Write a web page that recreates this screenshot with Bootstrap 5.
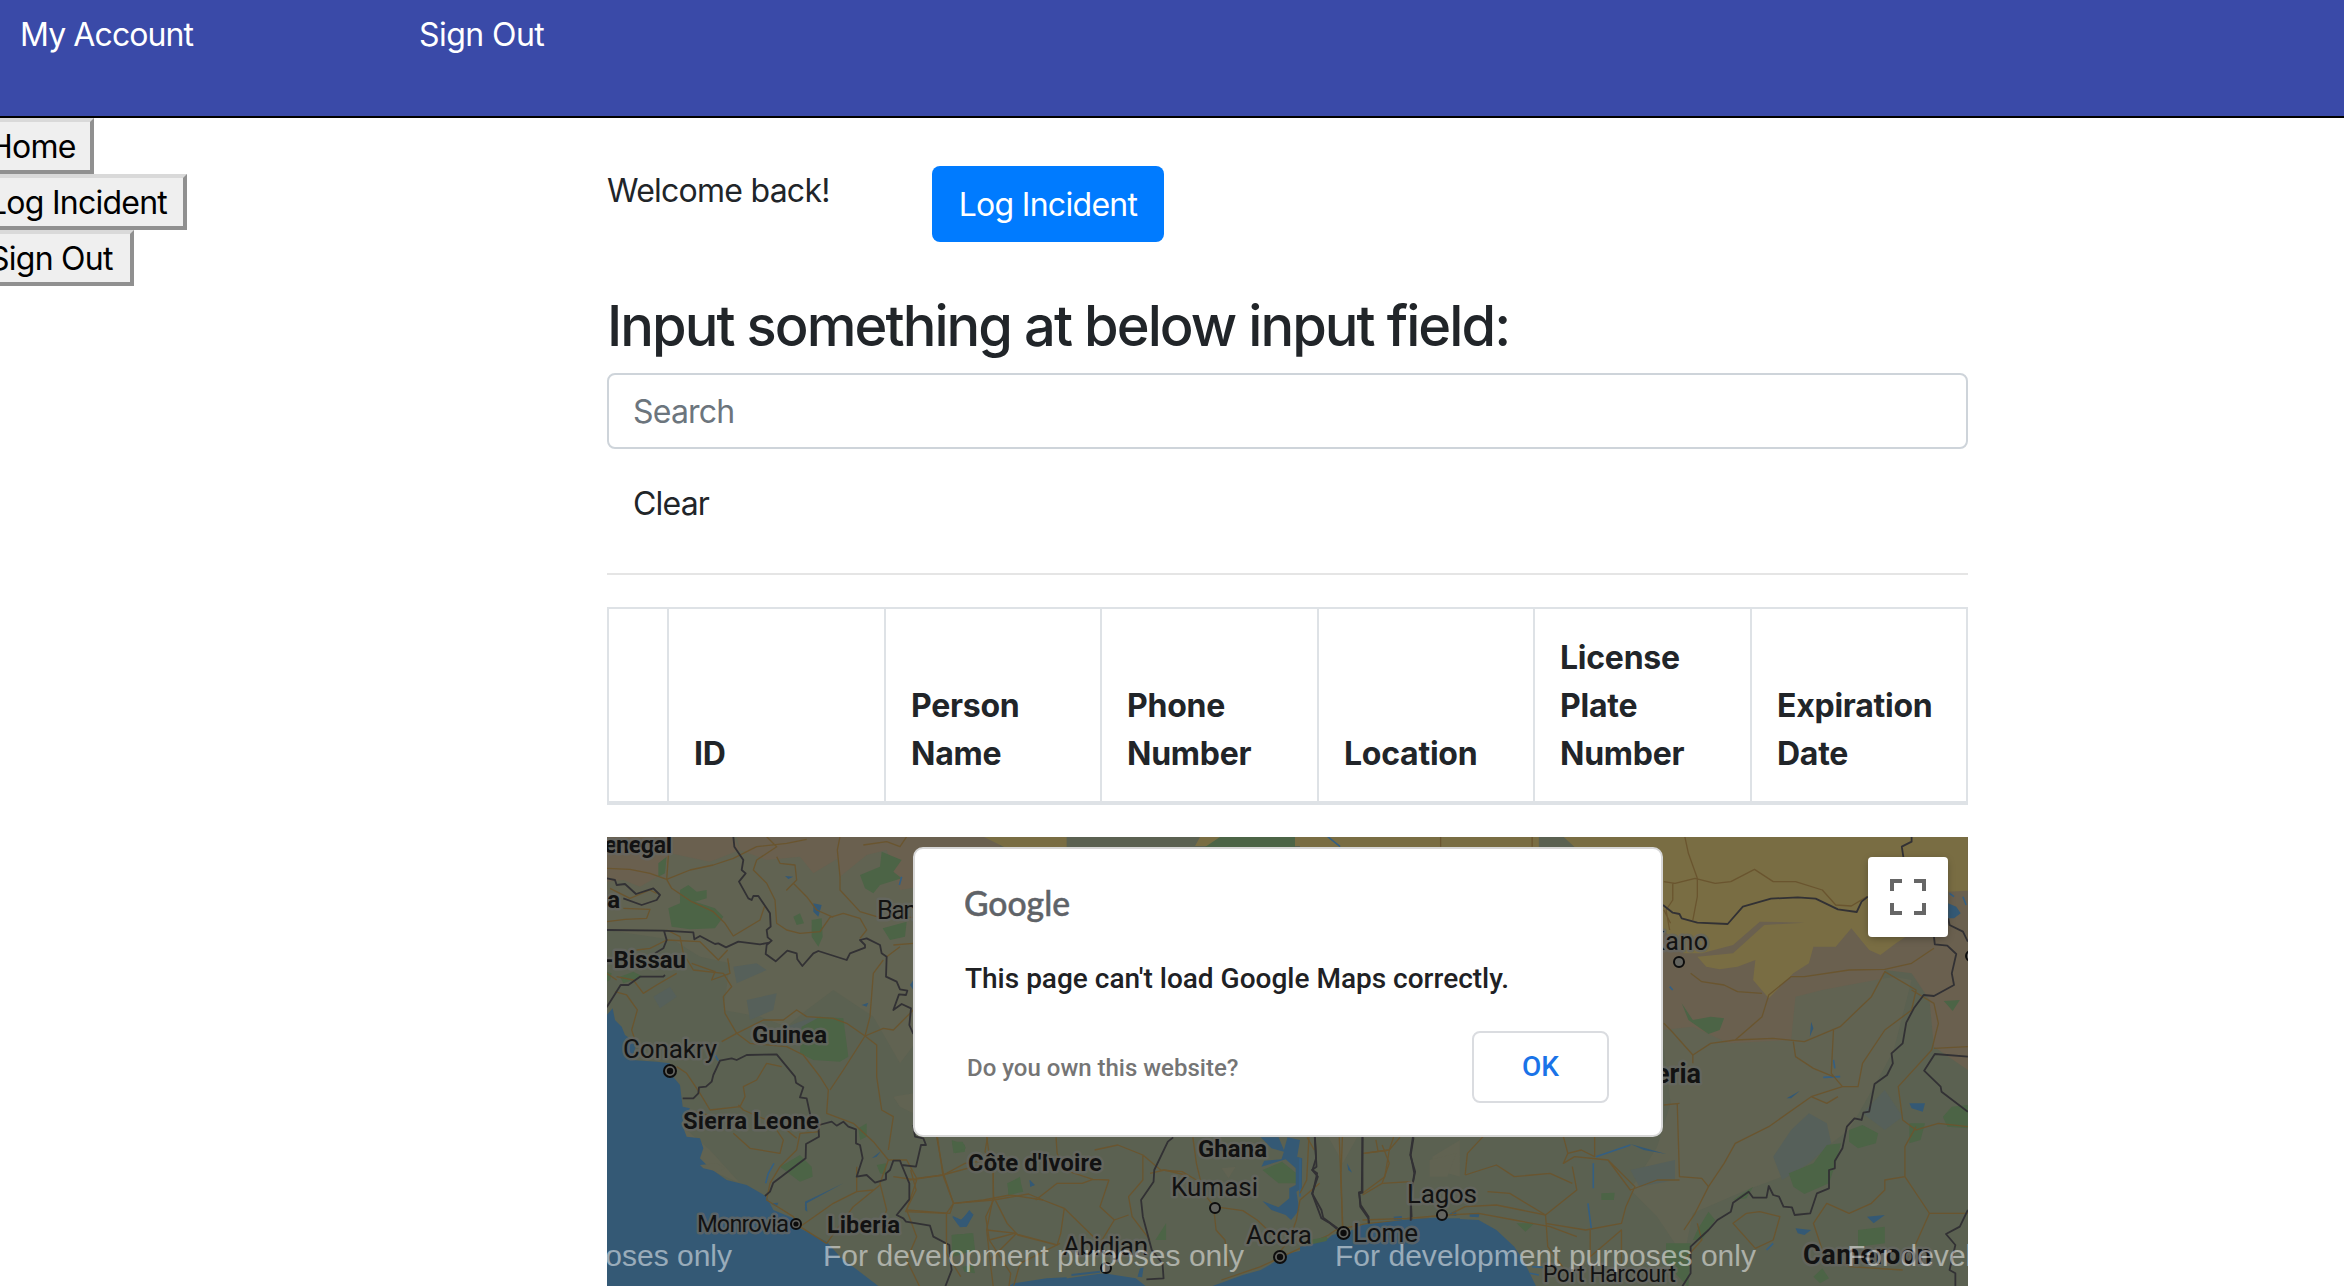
<!DOCTYPE html>
<html lang="en">
<head>
<meta charset="utf-8">
<meta name="viewport" content="width=device-width, initial-scale=1">
<title>Incidents</title>
<link href="https://cdn.jsdelivr.net/npm/bootstrap@5.3.0/dist/css/bootstrap.min.css" rel="stylesheet">
<style>
html { font-size: 32px; }
body { font-family: Inter, "Liberation Sans", sans-serif; font-size: 32px; line-height: 1.5; color: #212529; background: #fff; overflow: hidden; height: 1286px; letter-spacing: -.75px; }
.topbar { height: 118px; background: #3a4aa8; border-bottom: 2px solid #000; padding: 11px 0 0 20px; }
.topbar a { color: #fff; text-decoration: none; width: 399px; line-height: 48px; }
.topbar a:first-child { letter-spacing: -.9px; }
.topbar a:last-child { letter-spacing: -.55px; }
.side { width: 607px; margin-left: -31px; flex: none; }
.side button { height: 56px; border: 4px solid; border-color: #d9d9d9 #909090 #909090 #d9d9d9; background: #efefef; color: #000; padding: 2px 16px 0; line-height: 46px; white-space: nowrap; letter-spacing: -.75px; text-align: left; }
.side .w-home { width: 125px; } .side .w-log { width: 218px; } .side .w-out { width: 165px; }
.content { width: 1361px; margin-left: 31px; padding-top: 48px; flex: none; }
.welcome { width: 325px; padding-top: 1px; }
.btn-log { width: 232px; height: 76px; padding: 0; border: 0; border-radius: 8px; background: #007bff; color: #fff; font-size: 32px; letter-spacing: -.7px; line-height: 78px; }
.btn-log:hover { background: #007bff; color: #fff; }
.ttl { font-size: 56px; font-weight: 550; line-height: 67px; letter-spacing: -1.94px; padding-top: 3px; margin: 48px 0 13px; white-space: nowrap; }
.field { height: 76px; border: 2px solid #ced4da; border-radius: 8px; padding: 1px 24px 0; font-size: 32px; letter-spacing: -.8px; }
.field::placeholder { color: #6c757d; opacity: 1; }
.btn-clear { margin-top: 16px; height: 76px; padding: 2px 26px 0; border: 0; font-size: 32px; letter-spacing: -.8px; color: #212529; }
.sep { height: 2px; margin: 32px 0; background: #e5e5e5; }
.grid-t { width: 1361px; table-layout: fixed; margin: 0 0 32px; border-collapse: separate; border-spacing: 0; border: 0 solid #dee2e6; border-top-width: 2px; border-left-width: 2px; }
.grid-t th { border: 0 solid #dee2e6; border-right-width: 2px; border-bottom-width: 4px; padding: 25px 0 23px 25px; height: 196px; vertical-align: bottom; font-weight: 700; letter-spacing: -.25px; line-height: 48px; }
.map { height: 449px; overflow: hidden; background: #5b6151; }
.map > svg { display: block; }
.dlg { left: 306px; top: 10px; width: 750px; height: 290px; background: #fff; border: 2px solid #d7d7d7; border-radius: 10px; font-family: Roboto, sans-serif; letter-spacing: 0; padding: 37px 52px 0 50px; }
.dlg-msg { font-size: 28px; font-weight: 500; line-height: 36px; margin-top: 31px; color: #202124; white-space: nowrap; }
.dlg-row { margin-top: 34px; }
.dlg-own { font-size: 24px; font-weight: 500; color: #757575; padding: 2px 0 0 2px; }
.dlg-ok { width: 137px; height: 72px; border: 2px solid #dadce0; border-radius: 8px; background: #fff; color: #1a73e8; font-size: 28px; font-weight: 500; padding: 0; }
.fs { right: 20px; top: 20px; width: 80px; height: 80px; background: #fff; border: 0; border-radius: 4px; box-shadow: 0 2px 8px -2px rgba(0,0,0,.4); }
.map path { vector-effect: non-scaling-stroke; stroke-linejoin: round; }
.road path { fill: none; stroke: #6a552f; stroke-width: 1.3; }
.bord path { fill: none; stroke: #323134; stroke-width: 1.8; }
.sea path { fill: #345975; } .rivr path { fill: none; stroke: #345f83; stroke-width: 1.6; }
.green path { fill: #4c6446; } .sand path { fill: #796d43; } .brown path { fill: #6a604f; } .olive path { fill: #616352; } .dim path { fill: #56605a; }
.lbl text { font-family: Roboto, sans-serif; letter-spacing: 0; fill: #121212; stroke: #666763; stroke-width: 5px; stroke-opacity: .75; paint-order: stroke; stroke-linejoin: round; font-size: 26px; }
.lbl .ctry { font-weight: 700; font-size: 24px; }
.wm text { font-family: "Liberation Sans", Arial, sans-serif; letter-spacing: 0; font-size: 30px; fill: #fff; fill-opacity: .5; }
</style>
<script src="https://cdn.jsdelivr.net/npm/bootstrap@5.3.0/dist/js/bootstrap.bundle.min.js"></script>
</head>
<body>
<nav class="topbar d-flex"><a href="#">My Account</a><a href="#">Sign Out</a></nav>
<div class="d-flex">
  <aside class="side d-flex flex-column align-items-start">
    <button class="w-home">Home</button><button class="w-log">Log Incident</button><button class="w-out">Sign Out</button>
  </aside>
  <main class="content">
    <div class="d-flex align-items-start"><div class="welcome">Welcome back!</div><button class="btn btn-log">Log Incident</button></div>
    <h3 class="ttl">Input something at below input field:</h3>
    <input class="form-control field" type="text" placeholder="Search">
    <button class="btn btn-clear">Clear</button>
    <div class="sep"></div>
    <table class="grid-t">
      <colgroup><col style="width:60px"><col style="width:217px"><col style="width:216px"><col style="width:217px"><col style="width:216px"><col style="width:217px"><col style="width:216px"></colgroup>
      <thead><tr><th></th><th>ID</th><th>Person<br>Name</th><th>Phone<br>Number</th><th>Location</th><th>License<br>Plate<br>Number</th><th>Expiration<br>Date</th></tr></thead>
    </table>
    <div class="map position-relative">
      <svg width="1361" height="449" viewBox="607 837 1361 449">
        <!-- terrain, west -->
        <g transform="translate(600 830) scale(.33333)">
          <g class="olive"><path d="M20 20H960V620L900 700 820 560 700 480 620 540 560 590 480 560 370 540 390 400 300 380 220 330 20 300Z"/><path d="M120 930 200 840 260 900 330 960 420 1060 330 1020ZM880 800 940 790V850L900 830Z"/></g>
          <g class="dim"><path d="M160 500 210 470 230 500 180 535ZM400 410 470 400 500 420 410 460ZM560 590 640 560 700 590 600 640ZM440 510 530 490 520 540 450 570Z"/></g>
          <g class="brown"><path d="M20 20H400L420 60 330 95 210 70 190 130 120 170 70 150 20 155ZM410 20H1200V130L900 180 860 60 800 75 720 140 715 85 640 130 600 80 500 90 420 60Z"/></g>
          <g class="sand"><path d="M1150 20H1400V60H1230Z"/></g>
          <g class="green"><path d="M205 235 240 220 240 180 265 165 290 185 320 180 320 205 285 215 345 235 370 260 345 295 270 298 215 290ZM175 100 200 80 195 130 175 140ZM780 135 840 110 845 65 905 90 880 125 905 145 840 165 820 190 795 175ZM580 260 600 250 612 280 590 285ZM635 270 665 265 668 320 655 350 635 320ZM848 295 920 275 915 320 870 330ZM60 440 100 425 130 440 70 460ZM605 590 660 560 730 565 745 680 720 695 640 690 600 670ZM540 1010 600 975 635 1010 638 1040 600 1055ZM775 895 800 880 800 920 780 930ZM830 1005 858 1000 858 1035 840 1030ZM1055 930 1095 945 1095 965 1065 970ZM1225 1060 1260 1040 1265 1080 1225 1095ZM1055 1215 1115 1210 1125 1260 1060 1280ZM20 425 35 430 30 450 20 455Z"/></g>
          <g class="sea"><path d="M20 555 38 535 45 570 65 590 75 615 110 640 95 690 170 695 210 700 215 735 240 765 248 830 270 835 245 880 260 920 300 925 310 955 300 985 330 1015 380 1050 440 1065 500 1100 520 1140 580 1165 600 1195 680 1235 720 1280 840 1372 20 1372Z"/></g>
          <g class="olive"><path d="M300 1005 350 1000 375 1015 355 1025 310 1015Z"/></g>
          <g class="sea"><path d="M1057 1157 1085 1170 1108 1140 1120 1155 1100 1190 1075 1185ZM1290 1050 1303 1065 1290 1070ZM640 220 665 225 655 260 640 245ZM555 138 580 140 565 147ZM615 1115 730 1060 620 1120 622 1145 615 1140ZM785 525 805 518 800 530ZM940 450 930 465 940 480ZM815 985 843 963 830 980ZM1240 1360 1340 1345 1400 1342V1372H1220ZM510 1120 535 1118 530 1130Z"/></g>
          <g class="rivr"><path d="M522 1000 505 1030 497 1060M905 140 898 165M345 675 355 692"/></g>
          <g class="road">
            <path d="M20 115 90 118 150 130 200 148 270 120 340 105 400 85 470 50 560 40 620 28M210 20 205 80 200 148 215 175 275 215 340 245 375 280 400 318 480 270 495 225M20 275 75 268 140 265 150 238 70 235M30 175 90 205 150 180 170 190"/>
            <path d="M500 20 530 50 470 90 460 120 500 160 525 210 530 280 560 300 600 310 660 305 690 262 730 250 780 265 800 300 780 325M530 80 540 100 585 105 590 150 560 180 580 160 620 200 650 240 700 262M720 20 712 60 720 140 720 180 780 245 830 260 940 262M790 45 860 35 900 50 920 20"/>
            <path d="M200 300 240 320 250 370 280 420 370 430 395 470 370 500 375 550 410 610 450 640 560 650 610 675 660 740 685 780 680 850 760 880 820 935 865 990 840 1060 860 1140 840 1190"/>
            <path d="M110 360 150 355 200 330 300 335 355 390 383 360M383 385 390 430 335 450 345 425 275 400M50 440 100 450 130 490 170 465 230 430M45 485 80 495 112 540 95 600 105 630M20 430 50 450"/>
            <path d="M365 635 410 610 490 570 550 570 590 540 620 560 700 565 740 580 795 618 830 645 830 740 845 840 880 860 865 960M850 390 820 430 810 560 795 618 730 720 690 780M795 618 850 595 880 600 940 540"/>
            <path d="M230 710 260 730 300 790 330 840 420 830 435 800 430 770 470 750 500 700 545 710M250 860 290 845 340 860M400 910 450 955 540 970 550 930 530 900M660 905 600 910 590 960 540 1010 510 1060 500 1110 580 1160 600 1190 680 1240 760 1130 840 1065M600 1190 700 1120 770 1085 820 1080M770 1085 770 1010M560 900 590 925M415 825 430 840 500 870"/>
            <path d="M865 990 920 990 950 1045 1030 1035 1095 1000 1170 990 1160 920M1010 920 1030 1030 1060 1120 1150 1110 1230 1095 1330 1110M880 1040 950 1050 920 1140 1050 1150 1060 1120M920 1140 950 1220 920 1290 960 1372M1160 1200 1250 1210 1170 1290 1180 1372M1180 1000 1180 1100 1160 1200 1170 1290M1240 1372 1260 1300 1380 1240M880 345 940 340M860 380 900 350"/>
          </g>
          <g class="bord">
            <path d="M400 20 403 50 430 90 425 120 437 130 417 155 445 205 455 210 460 198 475 198 510 250 512 290 500 300 503 322 515 332 500 345 497 372 527 394 562 362 590 370 592 388 607 408 640 370 655 363 740 390 750 370 795 353 795 345 780 330 800 325 840 345 845 370 860 380 858 440 890 455 900 478 922 482 918 495 897 493 880 540 905 522 933 535 928 585 940 612"/>
            <path d="M20 145 45 150 50 165 75 162 108 192 160 175 180 195 170 210 125 225 70 205M20 300 190 302 280 307 283 328 300 318 345 342 355 340 378 352 415 335 480 343 508 338M192 302 200 330 190 355 165 370M195 435 190 440 120 440 85 465 62 465 40 500 20 532"/>
            <path d="M248 805 280 805 295 790 297 772 318 770 335 755 340 735 360 692 395 685 410 690 440 675 530 673 585 740 588 758 610 772 600 802 620 805 633 865 655 885 657 920 618 942 617 985 520 1058 510 1085 495 1098M657 885 695 875 710 887 730 875 745 890 768 898 768 940 780 945 788 985 770 1040 800 1035 825 1058 858 1048 858 1030 870 1020 880 992 900 992 905 1005 948 1010 963 945 978 945 970 925 945 920 940 885M905 1005 928 1060 928 1108 890 1155 910 1165 918 1175 990 1187 1000 1220 1048 1245 1050 1280 1055 1320 1035 1372"/>
          </g>
        </g>
        <!-- coast, centre -->
        <g transform="translate(900 1120) scale(.35714 .33333)">
          <g class="green"><path d="M145 65 175 65 185 85 150 100ZM300 190 335 175 345 215 305 225ZM145 345 205 340 210 390 145 390ZM1015 150 1070 125 1110 160 1110 190 1060 190ZM715 360 745 310 745 360ZM175 440 205 435 210 460 180 455ZM1165 360 1200 355 1200 382 1160 382Z"/></g>
          <g class="olive"><path d="M1200 52 1280 52 1240 130ZM900 145 940 140 920 175ZM1490 110 1568 60V170L1500 150Z"/></g>
          <g class="sea">
            <path d="M320 495 470 475 570 460 660 475 690 500H320ZM870 500 960 465 1010 450 1090 400 1170 382 1210 345 1310 322 1430 300 1568 295V500Z"/>
            <path d="M1010 52 1060 52 1075 90 1085 52 1120 60 1112 110 1126 115 1125 205 1110 215 1118 270 1095 300 1080 285 1040 270 1015 243 1060 262 1090 235 1090 205 1108 195 1108 145 1080 118 1012 140 1020 122 1068 118 1075 95 1040 85ZM362 180 378 195 365 200ZM146 290 170 300 190 280 206 282 185 320 168 322ZM1252 130 1266 158 1255 150ZM672 445 682 442 678 472 665 470ZM480 462 560 452 560 458 480 468Z"/>
          </g>
          <g class="road">
            <path d="M245 52 238 95 260 130 262 230 300 310 330 345 440 375M105 52 120 165 150 250 262 240 360 222 400 240 460 265 560 370 600 300 560 260 585 180 540 178 460 150 440 100 437 52M545 90 610 75 680 105 680 180 640 230 650 290 700 360M25 180 120 165 240 130M380 240 440 190 510 190 540 178M15 275 130 280 150 250M15 275 45 210 30 150M130 280 130 400 170 470M460 265 450 340 440 375 320 340 250 360 310 460 305 500M250 360 240 290 262 240M600 300 640 285M680 105 730 150 790 155 830 180"/>
            <path d="M820 52 830 130 850 220 880 260 960 272 1000 300 1050 350M880 280 885 330 910 360 920 440M700 160 740 150 800 165M1230 52 1235 200 1240 320M1295 100 1370 90 1400 52M1350 75 1370 130 1350 190 1295 225M1350 190 1430 185M900 480 1010 440 1100 395 1200 345 1220 330 1310 310 1480 295M1175 190 1120 240 1110 300 1090 360 1060 400M1140 52 1160 90"/>
          </g>
          <g class="bord"><path d="M765 52 750 65 712 150 710 185 675 240 680 290 705 390 735 430 738 475 690 478M1162 52 1165 115 1155 150 1168 160 1155 222 1180 270 1185 293 1225 325M1295 52 1293 215 1285 217 1290 255 1312 290 1312 310M1438 52 1430 105 1440 160 1430 230 1433 300"/></g>
        </g>
        <!-- terrain, east -->
        <g transform="translate(1300 830) scale(.44643 .33333)">
          <g class="brown"><path d="M800 20H1496V720L1420 650 1410 510 1370 430 1310 420 1290 520 1210 600 1100 660 960 650 880 600 810 600Z"/><path d="M900 800 960 740 1020 760 990 810 930 870 880 860ZM1150 810 1200 800 1180 850Z"/></g>
          <g class="olive"><path d="M810 600 880 590 960 640 1100 630 1110 500 1170 480 1250 460 1330 440 1370 450 1330 660 1290 760 1230 900 1100 1030 1000 1080 880 1150 860 1280 800 1160 740 1080 800 950 830 820ZM290 990 350 970 330 1040 290 1040Z"/></g>
          <g class="dim"><path d="M1100 900 1140 850 1180 880 1190 940 1140 1000 1080 1050 1060 980ZM1260 850 1310 780 1350 860 1310 900ZM740 1020 840 990 840 1050 760 1070Z"/></g>
          <g class="sand"><path d="M0 20H535V53H0ZM590 20H1496V182L1450 185 1440 250 1380 300 1335 340 1300 375 1275 360 1235 295 1200 350 1150 350 1140 400 1105 430 1090 450 1050 505 1015 450 1020 390 980 410 940 418 910 410 890 380 970 370 1040 285 1130 278 1030 275 970 345 900 370 860 370 815 300Z"/></g>
          <g class="green"><path d="M855 520 880 570 920 560 950 565 940 600 915 612 870 570ZM1095 1030 1150 1000 1180 945 1212 940 1200 1000 1185 1060 1130 1092 1105 1070ZM1230 900 1260 885 1295 910 1290 940 1250 955 1230 935ZM1442 513 1478 510 1462 543ZM1440 860 1460 830 1496 825V895L1450 890ZM1365 880 1400 880 1390 930 1365 940ZM890 1200 915 1145 930 1170 900 1230 880 1230ZM820 1240 875 1240 870 1372 820 1300ZM485 1180 525 1180 505 1205ZM675 1090 705 1088 703 1110 675 1110ZM1250 1200 1310 1190 1310 1240 1250 1250ZM1150 1340 1170 1315 1185 1345 1165 1360ZM970 1110 1015 1070 1000 1105ZM0 1235 60 1220 60 1255 20 1250Z"/></g>
          <g class="sea"><path d="M0 1250 70 1230 140 1185 230 1170 300 1163 400 1170 440 1200 480 1250 500 1290 530 1372H0ZM210 1160 228 1158 228 1170 210 1170ZM380 1150 402 1150 400 1162 380 1160ZM1452 220 1470 230 1480 250 1465 265 1452 265ZM1365 820 1400 820 1395 845 1370 835ZM1110 1195 1145 1200 1130 1215 1115 1210ZM1270 1160 1310 1155 1285 1180ZM1145 575 1150 595 1142 620ZM1090 805 1120 782 1100 805ZM740 942 820 972 770 960ZM330 1155 350 1140 350 1158Z"/></g>
          <g class="rivr"><path d="M663 980 740 945M657 1000 657 1075M645 1120 653 1200M62 20 90 50M828 470 835 480M1172 742 1210 740M1195 690 1198 715M1455 190 1465 200M1485 200 1492 225M1045 1260 1060 1240M520 1310 545 1312M515 1330 535 1335M0 985V1100"/></g>
          <g class="road">
            <path d="M862 20 870 70 890 145 890 200 880 270M815 155 840 160 885 145 930 160 965 155 1018 118 1060 155 1110 155 1170 180 1200 225 1235 228 1270 200M835 160 835 210 820 240 828 300M315 20V50M520 20V50M815 240 830 280"/>
            <path d="M875 430 900 455 950 465 980 485 1035 490M1130 440 1100 440 1050 495 1035 560 975 630 920 640 880 675 830 600 815 580M975 630 1060 625 1130 635 1210 590 1280 500 1310 425 1380 480 1370 540 1310 600 1260 700 1250 770 1215 770 1190 730 1195 600M1130 440 1230 420 1310 418 1370 400 1420 355M1105 635 1110 680 1150 715 1195 740M1215 770 1145 800 1050 890 975 940 950 1000 915 1070 885 1150 860 1200M1145 800 1180 820 1205 800"/>
            <path d="M1370 480 1420 520 1430 580 1415 660 1340 770 1350 870 1380 900 1430 880 1496 890M1420 655 1496 650M1380 890 1355 950 1355 1040 1390 1110 1410 1150 1380 1240 1360 1290M1355 1040 1310 1050 1310 1080 1280 1120 1230 1150 1180 1120 1150 1180 1170 1260 1230 1310 1350 1320M1410 1150 1496 1150"/>
            <path d="M845 820 850 1040 900 1045 915 1070M880 675 880 700M815 825 850 820M600 970 590 1000 615 980 690 990 740 1080 800 1050 850 1050M590 920 600 970 630 960 660 980 660 920M690 990 750 1070 730 1130 720 1180 640 1200 550 1180M610 1010 620 1080 550 1155 440 1125 370 1130 340 1150M550 1155 555 1250 610 1350M370 1035 440 1005 480 1040 560 1030 610 1060M370 1035 375 970 410 920M145 970 200 960 210 920M200 960 190 1040 140 1090M170 930 175 965M140 1170 240 1165 330 1155 400 1150 480 1170 560 1190 620 1220"/>
            <path d="M1000 1150 1030 1145 1075 1160 1060 1230 1020 1255 970 1180 1000 1150M860 1290 900 1230 890 1180M650 1200 650 1280 720 1200 720 1300M420 1085 470 1090 550 1155M95 920 92 1030 95 1190M20 920 15 1050 0 1090"/>
          </g>
          <g class="bord">
            <path d="M1370 20V35L1348 50 1352 85M813 225 835 248 850 252 855 265 890 278 958 282 992 230 1055 206 1115 202 1155 206 1205 238 1247 246 1258 215 1272 200M1452 265 1455 285 1485 305 1496 335M1420 320 1422 343 1450 347 1470 372 1460 430 1465 465 1420 498 1397 495 1375 535 1358 578 1350 640 1325 670 1328 700 1315 735 1287 762 1275 845 1262 848 1258 870 1242 865 1225 890 1215 955 1198 993 1198 1015 1185 1020 1185 1075 1158 1090 1143 1150 1108 1155 1102 1132 1083 1130 1073 1100 1060 1095 1050 1068 1045 1103 1015 1103 1005 1085 970 1118 965 1145 935 1170 915 1200 875 1250 875 1330 855 1372M1496 680 1422 672 1398 722 1435 770 1437 785 1496 845M1496 1140 1478 1190 1447 1212 1468 1245 1455 1320 1468 1330 1468 1372"/>
            <path d="M33 920 37 1010 27 1020 40 1040 27 1090 48 1165 65 1178 83 1197M140 920V1088L133 1090 135 1130 153 1165 155 1180M253 920 247 975 258 1025 248 1090 248 1172"/>
          </g>
        </g>
        <path d="M1300 837H1200L1195 846H1300ZM1000 837H1062L1052 847H1010Z" fill="#796d43"/>
        <path d="M1220 837H1295V847H1205Z" fill="#4c6446"/>
        <g class="lbl">
          <text class="ctry" x="590" y="853" textLength="82">Senegal</text>
          <text class="ctry" x="620" y="908" text-anchor="end">The Gambia</text>
          <text class="ctry" x="686" y="968" text-anchor="end">Guinea-Bissau</text>
          <text x="623" y="1057.5" textLength="94">Conakry</text>
          <text x="877" y="918.5" textLength="85">Bamako</text>
          <text class="ctry" x="752" y="1043" textLength="75">Guinea</text>
          <text class="ctry" x="683" y="1129" textLength="136">Sierra Leone</text>
          <text class="ctry" x="968" y="1171" textLength="134">Côte d'Ivoire</text>
          <text x="697" y="1231.5" textLength="92" style="font-size:24px">Monrovia</text>
          <text class="ctry" x="827" y="1233" textLength="73">Liberia</text>
          <text class="ctry" x="1198" y="1157" textLength="69">Ghana</text>
          <text x="1171" y="1195.5" textLength="87">Kumasi</text>
          <text x="1246" y="1244" textLength="66">Accra</text>
          <text x="1353" y="1241.5" textLength="65">Lome</text>
          <text x="1063" y="1255" textLength="85">Abidjan</text>
          <text x="1407" y="1202.5" textLength="70">Lagos</text>
          <text x="1543" y="1282" textLength="133" style="font-size:23px">Port Harcourt</text>
          <text class="ctry" x="1803" y="1264" textLength="129" style="font-size:27px">Cameroon</text>
          <text x="1649" y="950" textLength="59" style="font-size:25px">Kano</text>
          <text class="ctry" x="1701" y="1083" text-anchor="end" style="font-size:27px">Nigeria</text>
        </g>
        <g fill="none" stroke="#0d0d0d" stroke-width="2">
          <g fill="#63645f"><circle cx="670" cy="1071" r="6"/><circle cx="796" cy="1224" r="5"/><circle cx="1280" cy="1257" r="6"/><circle cx="1343.500" cy="1233" r="6"/><circle cx="1215" cy="1208" r="5"/><circle cx="1106" cy="1268" r="5"/><circle cx="1442" cy="1215" r="5"/><circle cx="1679" cy="962" r="5"/><circle cx="1971" cy="956" r="5"/></g>
          <g fill="#0d0d0d" stroke="none"><circle cx="670" cy="1071" r="3.200"/><circle cx="796" cy="1224" r="2.600"/><circle cx="1280" cy="1257" r="3.200"/><circle cx="1343.500" cy="1233" r="3.200"/></g>
        </g>
        <g class="wm">
          <text x="312" y="1266" textLength="420">For development purposes only</text>
          <text x="823" y="1266" textLength="421">For development purposes only</text>
          <text x="1335" y="1266" textLength="421">For development purposes only</text>
          <text x="1847" y="1266" textLength="421">For development purposes only</text>
        </g>
      </svg>
      <div class="dlg position-absolute">
        <svg class="d-block" width="110" height="44" viewBox="0 0 110 44"><text x="-1" y="30" textLength="106" lengthAdjust="spacingAndGlyphs" font-family="Lato" font-size="35" font-weight="500" fill="#5f6368" stroke="#5f6368" stroke-width=".5">Google</text></svg>
        <div class="dlg-msg">This page can't load Google Maps correctly.</div>
        <div class="dlg-row d-flex justify-content-between align-items-center"><span class="dlg-own">Do you own this website?</span><button class="dlg-ok">OK</button></div>
      </div>
      <button class="fs position-absolute p-0 d-flex align-items-center justify-content-center" aria-label="Toggle fullscreen view">
        <svg width="36" height="36" viewBox="0 0 18 18" fill="#666"><path d="M0 0v6h2V2h4V0H0zM16 0h-4v2h4v4h2V0h-2zM16 16h-4v2h6v-6h-2v4zM2 12H0v6h6v-2H2v-4z"/></svg>
      </button>
    </div>
  </main>
</div>
</body>
</html>
